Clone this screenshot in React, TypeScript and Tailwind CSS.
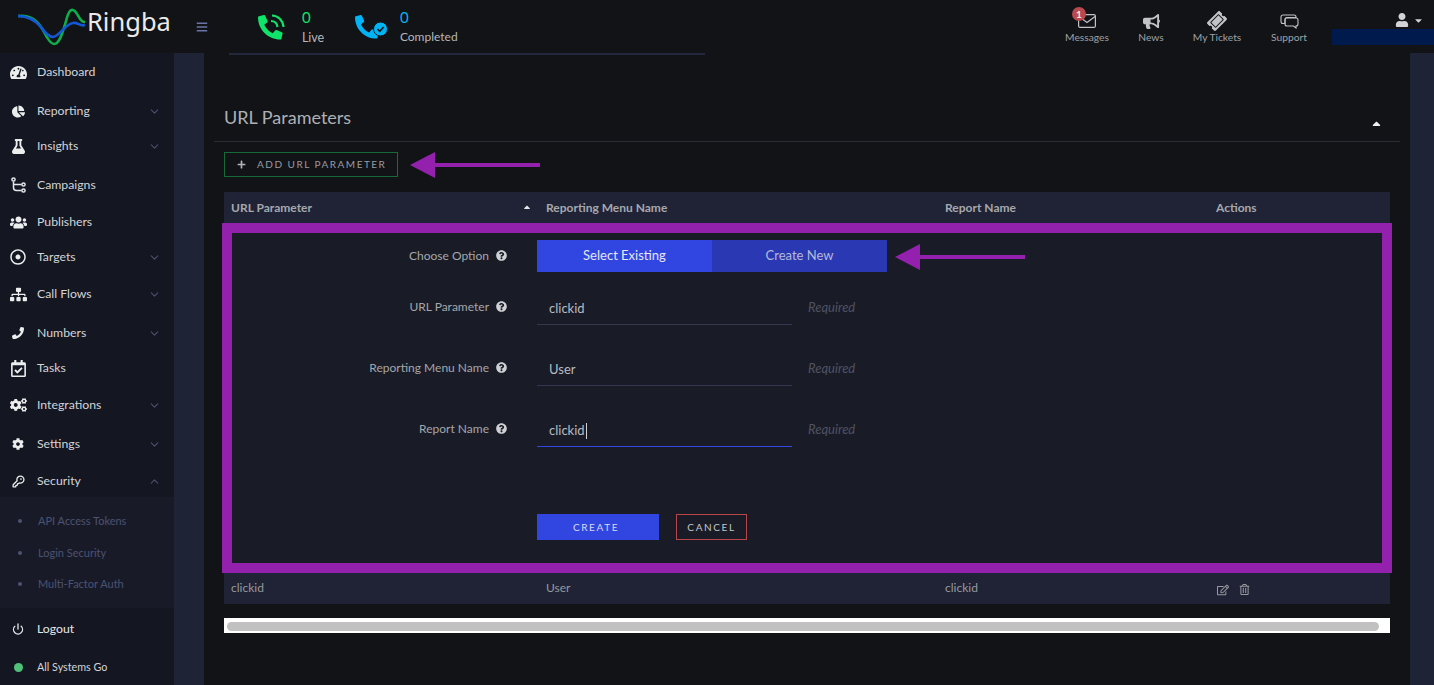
import React from "react";
import { ChevronDown, ChevronUp, KeyRound, Power } from "lucide-react";
import {
  FaTachometerAlt, FaChartPie, FaFlask, FaUsers, FaRegDotCircle, FaSitemap, FaPhone,
  FaRegCalendarCheck, FaCogs, FaCog, FaBars, FaBullhorn, FaTicketAlt, FaUser, FaCaretDown,
  FaCaretUp, FaPlus, FaQuestionCircle, FaRegEdit, FaRegTrashAlt,
} from "react-icons/fa";

const PHONE = "M497.39 361.8l-112-48a24 24 0 0 0-28 6.9l-49.6 60.6A370.66 370.66 0 0 1 130.6 204.11l60.6-49.6a23.94 23.94 0 0 0 6.9-28l-48-112A24.16 24.16 0 0 0 122.6.61l-104 24A24 24 0 0 0 0 48c0 256.5 207.9 464 464 464a24 24 0 0 0 23.4-18.6l24-104a24.29 24.29 0 0 0-14.01-27.6z";

function Logo() {
  return (
    <svg width="68" height="40" viewBox="0 0 68 40" className="shrink-0" fill="none">
      <path d="M0 9 C14 8 20 14 26 25 C30 33 33 37 36 37 C42 37 45 24 48 14 C50 6 52 2 55 3 C59 4 60 11 64 14 C65 15 66 15 67 15" stroke="#0fae4c" strokeWidth="2.6" />
      <path d="M0 9 C10 9 17 13 23 20 C28 27 31 30 35 30 C42 29 47 17 55 16 C60 15 62 20 67 18" stroke="#1257d6" strokeWidth="2.6" />
    </svg>
  );
}

function CampaignIcon() {
  return (
    <svg width="15" height="16" viewBox="0 0 15 16" fill="none" stroke="#e6e7ea" strokeWidth="1.5">
      <circle cx="2.5" cy="2.5" r="1.6" />
      <circle cx="12.5" cy="7.5" r="1.6" />
      <circle cx="12.5" cy="13.5" r="1.6" />
      <path d="M2.5 4.5V10.5C2.5 12.5 3.5 13.5 5.5 13.5H10.5M2.5 7.5H10.5" />
    </svg>
  );
}

const items = [
  { label: "Dashboard", icon: <FaTachometerAlt size={17} />, cls: "mt-[7px]" },
  { label: "Reporting", icon: <FaChartPie size={13} />, cls: "mt-[15px]", chev: true },
  { label: "Insights", icon: <FaFlask size={15} />, cls: "mt-[11px]", chev: true },
  { label: "Campaigns", icon: <CampaignIcon />, cls: "mt-[15px]" },
  { label: "Publishers", icon: <FaUsers size={17} />, cls: "mt-[13px]" },
  { label: "Targets", icon: <FaRegDotCircle size={16} />, cls: "mt-[11px]", chev: true },
  { label: "Call Flows", icon: <FaSitemap size={17} />, cls: "mt-[13px]", chev: true },
  { label: "Numbers", icon: <FaPhone size={12} />, cls: "mt-[15px]", chev: true },
  { label: "Tasks", icon: <FaRegCalendarCheck size={17} />, cls: "mt-[11px]" },
  { label: "Integrations", icon: <FaCogs size={18} />, cls: "mt-[13px]", chev: true },
  { label: "Settings", icon: <FaCog size={12} />, cls: "mt-[15px]", chev: true },
];

function NavItem({ label, icon, cls, chev }: { label: string; icon: React.ReactNode; cls: string; chev?: boolean }) {
  return (
    <div className={`flex h-6 items-center text-[12.25px] text-[#d3d4d8] ${cls}`}>
      <div className="flex w-[37px] justify-center text-[#eceded]">
        <span className="mr-[1px] flex w-[17px] justify-center">{icon}</span>
      </div>
      <span className="flex-1">{label}</span>
      {chev && <ChevronDown size={13} className="mr-[13px] text-[#4a5070]" />}
    </div>
  );
}

function Sidebar() {
  return (
    <aside className="flex w-[174px] shrink-0 flex-col bg-[#141722]">
      {items.map((it) => (
        <NavItem key={it.label} {...it} />
      ))}
      <div className="mt-[13px] flex h-6 items-center text-[12.25px] text-[#d3d4d8]">
        <div className="flex w-[37px] justify-center text-[#eceded]">
          <KeyRound size={13} strokeWidth={2.4} className="mr-[1px]" />
        </div>
        <span className="flex-1">Security</span>
        <ChevronUp size={13} className="mr-[13px] text-[#4a5070]" />
      </div>
      <div className="mt-1 h-[111px] bg-[#181b27] pt-[14px] text-[11px] text-[#4c5272]">
        <div className="flex h-5 items-center"><span className="ml-[18px] mr-4 h-[4px] w-[4px] rounded-full bg-[#4c5272]" />API Access Tokens</div>
        <div className="mt-3 flex h-5 items-center"><span className="ml-[18px] mr-4 h-[4px] w-[4px] rounded-full bg-[#4c5272]" />Login Security</div>
        <div className="mt-[11px] flex h-5 items-center"><span className="ml-[18px] mr-4 h-[4px] w-[4px] rounded-full bg-[#4c5272]" />Multi-Factor Auth</div>
      </div>
      <div className="mt-[9px] flex h-6 items-center text-[12.25px] text-[#e6e7ea]">
        <div className="flex w-[37px] justify-center"><Power size={12} strokeWidth={2.6} className="mr-[1px]" /></div>
        Logout
      </div>
      <div className="mt-[14px] flex h-6 items-center text-[10.75px] text-[#d3d4d8]">
        <div className="flex w-[37px] justify-center"><span className="mr-[1px] h-[9px] w-[9px] rounded-full bg-[#4fc178]" /></div>
        All Systems Go
      </div>
    </aside>
  );
}

function TopLink({ label, icon, cls }: { label: string; icon: React.ReactNode; cls: string }) {
  return (
    <div className={`mt-[11px] flex flex-col items-center self-start ${cls}`}>
      <div className="flex h-[20px] items-center">{icon}</div>
      <span className="mt-[-1px] whitespace-nowrap text-[10.25px] leading-[14px] text-[#9fa1a6]">{label}</span>
    </div>
  );
}

function Header() {
  return (
    <header className="flex h-[53px] shrink-0 items-center bg-[#111317]">
      <div className="ml-[18px] flex items-center">
        <Logo />
        <span className="mb-[9px] ml-[1px] [font-family:'Noto_Sans',sans-serif] text-[25.5px] leading-none text-[#e9eaeb]">Ringba</span>
      </div>
      <FaBars size={12} className="ml-[25px] text-[#6a74a6]" />

      <svg width="29" height="27" viewBox="0 0 29 27" fill="none" className="ml-[50px]">
        <g transform="translate(0 2) scale(0.048)"><path d={PHONE} fill="#0fe36a" /></g>
        <path d="M13 8C16.500 8 19 10.500 19.500 14M14 2.500C20 2.500 25 7.500 25.500 14" stroke="#0fe36a" strokeWidth="2.200" />
      </svg>
      <div className="ml-[15px] w-[53px]">
        <div className="mt-[1px] text-[15px] leading-[18px] text-[#0fe36a]">0</div>
        <div className="mt-1 text-[12.5px] leading-4 text-[#b6b7bb]">Live</div>
      </div>
      <svg width="34" height="26" viewBox="0 0 34 26" fill="none">
        <g transform="translate(0 1) scale(0.046)"><path d={PHONE} fill="#00b4f5" /></g>
        <circle cx="25.500" cy="15" r="7" fill="#00b4f5" stroke="#111317" strokeWidth="1" />
        <path d="M22.500 15L24.800 17.300L28.700 13" stroke="#111317" strokeWidth="1.600" />
      </svg>
      <div className="ml-[11px]">
        <div className="text-[15px] leading-[18px] text-[#00b4f5]">0</div>
        <div className="mt-[3px] text-[12px] leading-4 text-[#b6b7bb]">Completed</div>
      </div>

      <div className="flex-1" />
      <TopLink
        label="Messages"
        cls="relative w-[44px]"
        icon={
          <>
            <svg width="18" height="14" viewBox="0 0 18 14" fill="none" stroke="#c2c3c6" strokeWidth="1.200">
              <rect x="0.600" y="0.600" width="16.800" height="12.800" rx="1.500" />
              <path d="M1 2.500L9 8.500L17 2.500" />
            </svg>
            <span className="absolute left-[7px] top-[-4px] flex h-[14px] w-[14px] items-center justify-center rounded-full bg-[#b84a4f] text-[10px] font-bold text-[#f0e6e6]">1</span>
          </>
        }
      />
      <TopLink label="News" cls="ml-[28px] w-[28px]" icon={<FaBullhorn size={17} className="text-[#c2c3c6]" />} />
      <TopLink label="My Tickets" cls="ml-[28px] w-[48px]" icon={<FaTicketAlt size={18} className="-rotate-45 text-[#c2c3c6]" />} />
      <TopLink
        label="Support"
        cls="ml-[30px] w-[36px]"
        icon={
          <svg width="19" height="15" viewBox="0 0 19 15" fill="none" stroke="#c2c3c6" strokeWidth="1.100">
            <path d="M3 1H14C15.500 1 16 1.800 16 3V3.500H7C5.500 3.500 5 4.300 5 5.500V9.500H3C1.500 9.500 1 8.700 1 7.500V3C1 1.800 1.500 1 3 1Z" />
            <path d="M7 4H16C17.300 4 18 4.700 18 6V10C18 11.200 17.300 12 16 12V14L13.500 12H7C5.700 12 5 11.200 5 10V6C5 4.700 5.700 4 7 4Z" />
          </svg>
        }
      />
      <div className="relative ml-[25px] h-[53px] w-[102px]">
        <div className="absolute bottom-[8px] left-0 right-0 h-[16px] bg-[#001a4d]" />
        <FaUser size={14} className="absolute left-[63px] top-[13px] text-[#d2d3d6]" />
        <FaCaretDown size={11} className="absolute left-[81px] top-[15px] text-[#d2d3d6]" />
      </div>
    </header>
  );
}

function Help() {
  return <FaQuestionCircle size={11} className="ml-[7px] text-[#d0d1d4]" />;
}

function Field({ label, value, cls, active }: { label: string; value: string; cls: string; active?: boolean }) {
  return (
    <div className={`flex h-[37px] ${cls}`}>
      <div className="flex h-[37px] w-[275px] items-center justify-end text-[12px] text-[#a5a6ab]">
        {label}
        <Help />
      </div>
      <div className={`ml-[30px] flex h-[37px] w-[255px] items-center border-b pt-[5px] pl-3 text-[13px] text-[#b9bbc0] ${active ? "border-[#3146e0]" : "border-[#33364f]"}`}>
        {value}
        {active && <span className="ml-[1px] h-[16px] w-px bg-[#d0d1d4]" />}
      </div>
      <div className="ml-4 flex h-[37px] items-center pt-[3px] text-[13px] italic text-[#4f5264]">Required</div>
    </div>
  );
}

function Arrow({ cls, length }: { cls: string; length: number }) {
  return (
    <svg width={length} height="26" viewBox={`0 0 ${length} 26`} className={`absolute ${cls}`}>
      <path d={`M0 13L25 0V11H${length}V15H25V26Z`} fill="#9420ae" />
    </svg>
  );
}

function Main() {
  return (
    <main className="relative w-[1206px] shrink-0 bg-[#111317] px-[10px]">
      <div className="ml-[15px] h-[2px] w-[476px] bg-[#23283c]" />
      <div className="mt-[40px] flex h-[47px] items-center justify-between border-b border-[#2c2e35] px-[10px]">
        <h2 className="mb-[2px] text-[18px] font-normal text-[#aeb0b5]">URL Parameters</h2>
        <FaCaretUp size={13} className="mr-[7px] mt-[10px] text-[#f0f0f0]" />
      </div>
      <div className="mx-[10px]">
        <div className="mt-[10px] flex h-[25px] w-[174px] items-center border border-[#176a38] pl-3 text-[10px] tracking-[1.5px] text-[#9a9ba1]">
          <FaPlus size={9} className="mr-[11px] text-[#b3b4b8]" />
          ADD URL PARAMETER
        </div>
        <div className="mt-[15px] flex h-[31px] items-center bg-[#1f2335] text-[12px] font-bold text-[#a6a8ae]">
          <div className="relative w-[322px] pl-[7px]">
            URL Parameter
            <FaCaretUp size={10} className="absolute right-[14px] top-[3px] text-[#e6e6e6]" />
          </div>
          <div className="w-[399px]">Reporting Menu Name</div>
          <div className="w-[271px]">Report Name</div>
          <div>Actions</div>
        </div>

        <div className="-mx-[2px] h-[350px] border-[10px] border-[#9420ae] bg-[#191c26] pt-[7px]">
          <div className="flex h-[32px]">
            <div className="flex w-[275px] items-center justify-end pb-[1px] text-[12px] text-[#a5a6ab]">
              Choose Option
              <Help />
            </div>
            <div className="ml-[30px] flex w-[175px] items-center justify-center bg-[#3146e0] text-[13px] text-[#e6e8f5]">Select Existing</div>
            <div className="flex w-[175px] items-center justify-center bg-[#2b38b4] text-[13px] text-[#b5b9d9]">Create New</div>
          </div>
          <Field label="URL Parameter" value="clickid" cls="mt-[16px]" />
          <Field label="Reporting Menu Name" value="User" cls="mt-[24px]" />
          <Field label="Report Name" value="clickid" cls="mt-[24px]" active />
          <div className="ml-[305px] mt-[67px] flex h-[26px] text-[10px] tracking-[1.6px]">
            <div className="flex w-[122px] items-center justify-center bg-[#3146e0] pr-[4px] text-[#d8dbf0]">CREATE</div>
            <div className="ml-[17px] flex w-[71px] items-center justify-center border border-[#b8464a] text-[#c5c6ca]">CANCEL</div>
          </div>
        </div>

        <div className="flex h-[31px] items-center bg-[#1f2335] pb-[1px] text-[12px] text-[#97999f]">
          <div className="w-[322px] pl-[7px]">clickid</div>
          <div className="w-[399px]">User</div>
          <div className="w-[271px]">clickid</div>
          <FaRegEdit size={12} className="ml-[1px] mt-[3px]" />
          <FaRegTrashAlt size={11} className="ml-[10px] mt-[3px]" />
        </div>
        <div className="mt-[14px] h-[15px] bg-white px-[3px] py-[4px]">
          <div className="h-[9px] w-[1152px] rounded-full bg-[#c1c1c1]" />
        </div>
      </div>
      <Arrow cls="left-[206px] top-[99px]" length={130} />
      <Arrow cls="left-[691px] top-[191px]" length={130} />
    </main>
  );
}

export default function App() {
  return (
    <div className="flex h-screen w-full flex-col overflow-hidden bg-[#111317] [font-family:Lato,sans-serif]">
      <Header />
      <div className="flex min-h-0 flex-1">
        <Sidebar />
        <div className="w-[30px] shrink-0 bg-[#1e2336]" />
        <Main />
        <div className="flex-1 bg-[#1e2336]" />
      </div>
    </div>
  );
}
